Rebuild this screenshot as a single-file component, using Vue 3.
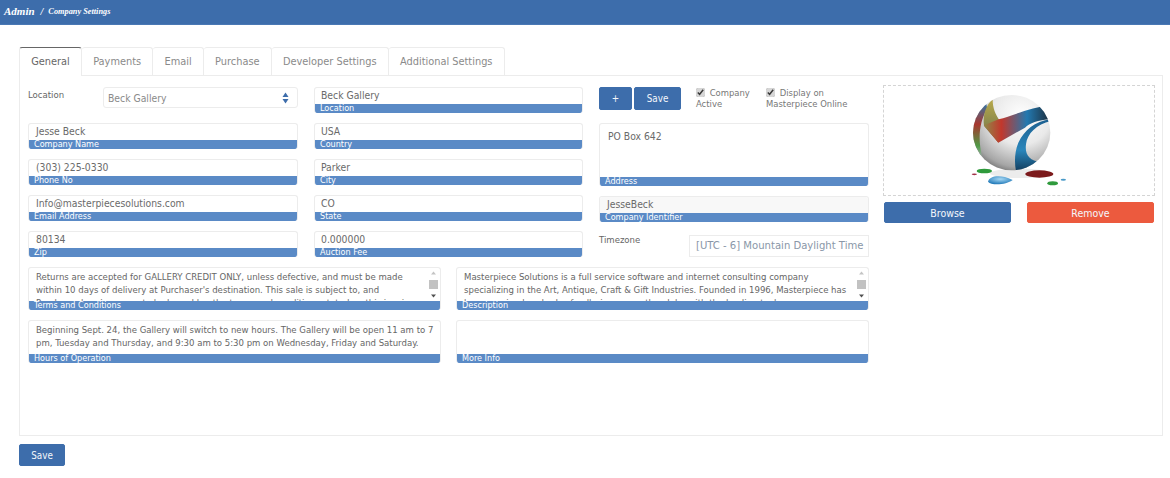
<script setup>
const tabs = ['General', 'Payments', 'Email', 'Purchase', 'Developer Settings', 'Additional Settings']

const leftFields = [
  { value: 'Jesse Beck', label: 'Company Name' },
  { value: '(303) 225-0330', label: 'Phone No' },
  { value: 'Info@masterpiecesolutions.com', label: 'Email Address' },
  { value: '80134', label: 'Zip' },
]

const midFields = [
  { value: 'Beck Gallery', label: 'Location' },
  { value: 'USA', label: 'Country' },
  { value: 'Parker', label: 'City' },
  { value: 'CO', label: 'State' },
  { value: '0.000000', label: 'Auction Fee' },
]

const areas = [
  {
    label: 'Terms and Conditions',
    scroll: true,
    text: "Returns are accepted for GALLERY CREDIT ONLY, unless defective, and must be made within 10 days of delivery at Purchaser's destination. This sale is subject to, and\nPurchaser herein agrees to be bound by, the terms and conditions stated on this invoice.",
  },
  {
    label: 'Description',
    scroll: true,
    text: 'Masterpiece Solutions is a full service software and internet consulting company specializing in the Art, Antique, Craft & Gift Industries. Founded in 1996, Masterpiece has been serving hundreds of galleries across the globe with the leading tools.',
  },
  {
    label: 'Hours of Operation',
    scroll: false,
    text: 'Beginning Sept. 24, the Gallery will switch to new hours. The Gallery will be open 11 am to 7\npm, Tuesday and Thursday, and 9:30 am to 5:30 pm on Wednesday, Friday and Saturday.',
  },
  { label: 'More Info', scroll: false, text: '' },
]
</script>

<template>
  <div class="page">
    <header class="topbar">
      <span class="crumb-main">Admin</span>
      <span class="crumb-sep">/</span>
      <span class="crumb-sub">Company Settings</span>
    </header>

    <div class="content">
      <ul class="tabs">
        <li v-for="(tab, i) in tabs" :key="tab" :class="['tab', { active: i === 0 }]">{{ tab }}</li>
      </ul>

      <section class="panel">
        <div class="form">
          <div class="fields">
            <div class="column">
              <div class="location-row">
                <span class="plain-label">Location</span>
                <div class="select">
                  <span>Beck Gallery</span>
                  <svg width="7" height="12" viewBox="0 0 7 12">
                    <path d="M3.5 0.5 L6.5 5 H0.5 Z" fill="#3d6dab" />
                    <path d="M3.5 11.5 L6.5 7 H0.5 Z" fill="#3d6dab" />
                  </svg>
                </div>
              </div>
              <div v-for="f in leftFields" :key="f.label" class="field">
                <div class="value">{{ f.value }}</div>
                <div class="bar">{{ f.label }}</div>
              </div>
            </div>

            <div class="column">
              <div v-for="f in midFields" :key="f.label" class="field">
                <div class="value">{{ f.value }}</div>
                <div class="bar">{{ f.label }}</div>
              </div>
            </div>

            <div class="column">
              <div class="actions">
                <button class="btn btn-plus">+</button>
                <button class="btn btn-save">Save</button>
                <label class="check check-one"><input type="checkbox" checked /> Company Active</label>
                <label class="check check-two"><input type="checkbox" checked /> Display on Masterpiece Online</label>
              </div>
              <div class="field address">
                <div class="value">PO Box 642</div>
                <div class="bar">Address</div>
              </div>
              <div class="field readonly">
                <div class="value">JesseBeck</div>
                <div class="bar">Company Identifier</div>
              </div>
              <div class="timezone-row">
                <span class="plain-label">Timezone</span>
                <div class="timezone">[UTC - 6] Mountain Daylight Time</div>
              </div>
            </div>
          </div>

          <div class="areas">
            <div v-for="a in areas" :key="a.label" class="area">
              <div class="area-body">
                <p class="area-text">{{ a.text }}</p>
                <div v-if="a.scroll" class="scrollbar">
                  <svg width="9" height="6" viewBox="0 0 9 6"><path d="M4.5 1.5 L7 4.5 H2 Z" fill="#c4c4c4" /></svg>
                  <div class="thumb"></div>
                  <svg width="9" height="6" viewBox="0 0 9 6"><path d="M4.5 4.5 L7 1.5 H2 Z" fill="#505050" /></svg>
                </div>
              </div>
              <div class="bar">{{ a.label }}</div>
            </div>
          </div>
        </div>

        <aside class="logo-side">
          <div class="dropzone">
            <svg class="logo" width="130" height="109" viewBox="0 0 390 327">
              <defs>
                <radialGradient id="ball" cx="0.62" cy="0.28" r="0.85">
                  <stop offset="0" stop-color="#ffffff" />
                  <stop offset="0.45" stop-color="#e9e9e9" />
                  <stop offset="0.8" stop-color="#a6a6a6" />
                  <stop offset="1" stop-color="#4e4e4e" />
                </radialGradient>
                <linearGradient id="band" x1="0" y1="0" x2="1" y2="0">
                  <stop offset="0" stop-color="#8f8a48" />
                  <stop offset="0.25" stop-color="#c2372c" />
                  <stop offset="0.62" stop-color="#2379b0" />
                  <stop offset="1" stop-color="#1b222b" />
                </linearGradient>
                <linearGradient id="arm" x1="0" y1="0" x2="0" y2="1">
                  <stop offset="0" stop-color="#b8a94a" />
                  <stop offset="0.55" stop-color="#8c8a4c" />
                  <stop offset="1" stop-color="#a2432f" />
                </linearGradient>
                <linearGradient id="stem" x1="0" y1="0" x2="0" y2="1">
                  <stop offset="0" stop-color="#1c5f8f" />
                  <stop offset="0.6" stop-color="#2a86bb" />
                  <stop offset="1" stop-color="#123c5c" />
                </linearGradient>
                <linearGradient id="edge" x1="0" y1="0" x2="0" y2="1">
                  <stop offset="0" stop-color="#2f78a8" />
                  <stop offset="0.4" stop-color="#a8362e" />
                  <stop offset="0.8" stop-color="#4f9a45" />
                  <stop offset="1" stop-color="#9db0a8" />
                </linearGradient>
                <radialGradient id="blue" cx="0.5" cy="0.35" r="0.65">
                  <stop offset="0" stop-color="#a6d8f4" />
                  <stop offset="1" stop-color="#1f78b8" />
                </radialGradient>
                <clipPath id="sphere">
                  <ellipse cx="185" cy="140" rx="116" ry="113" />
                </clipPath>
              </defs>
              <ellipse cx="210" cy="262" rx="90" ry="14" fill="#ececec" />
              <ellipse cx="185" cy="140" rx="116" ry="113" fill="url(#ball)" />
              <g clip-path="url(#sphere)">
                <path d="M108 50 C60 95 50 160 96 212 C84 160 86 110 112 68 Z" fill="url(#edge)" />
                <path d="M128 40 C106 60 98 90 102 120 L145 170 L150 105 C136 86 128 66 128 40 Z" fill="url(#arm)" />
                <path d="M102 118 L146 100 C190 90 250 58 310 58 L310 100 C265 100 240 112 225 125 L145 170 Z" fill="url(#band)" />
                <path d="M310 98 C255 105 225 130 205 170 C195 195 192 225 198 255 C218 258 250 250 272 228 C238 226 224 205 228 175 C232 142 262 112 310 104 Z" fill="url(#stem)" />
              </g>
              <ellipse cx="103" cy="255" rx="23" ry="7" fill="#2f9a3c" />
              <ellipse cx="73" cy="265" rx="8" ry="2.5" fill="#a03048" />
              <path d="M114 287 C118 270 150 264 188 282 C170 296 125 300 114 287 Z" fill="url(#blue)" />
              <ellipse cx="268" cy="264" rx="42" ry="11" fill="#7c1a1c" />
              <ellipse cx="308" cy="292" rx="16" ry="6" fill="#2f9a3c" />
              <ellipse cx="340" cy="281" rx="8" ry="3" fill="#4a9ac8" />
            </svg>
          </div>
          <div class="logo-buttons">
            <button class="btn btn-wide">Browse</button>
            <button class="btn btn-wide btn-danger">Remove</button>
          </div>
        </aside>
      </section>

      <button class="btn btn-bottom">Save</button>
    </div>
  </div>
</template>

<style>
html,
body {
  margin: 0;
  background: #ffffff;
}
</style>

<style scoped>
.page {
  width: 1170px;
  height: 478px;
  overflow: hidden;
  font-family: "DejaVu Sans Condensed", "DejaVu Sans", sans-serif;
  font-stretch: condensed;
  font-size: 10.3px;
  color: #666666;
}

.topbar {
  height: 25px;
  box-sizing: border-box;
  background: #3d6dab;
  border-bottom: 1px solid #4a78b4;
  padding: 5px 0 0 4px;
  color: #ffffff;
  font-family: "Liberation Serif", serif;
  font-style: italic;
  font-weight: bold;
  line-height: 13px;
  display: flex;
  gap: 5px;
}

.crumb-main {
  font-size: 11px;
}

.crumb-sep {
  font-size: 10px;
  margin-left: 1px;
}

.crumb-sub {
  font-size: 8.3px;
}

.content {
  padding: 22px 7px 0 19px;
}

.tabs {
  list-style: none;
  display: flex;
  margin: 0;
  padding: 0;
}

.tab {
  box-sizing: border-box;
  height: 28px;
  line-height: 27px;
  padding: 0 11.2px;
  border: 1px solid #ececec;
  border-left: 0;
  border-bottom: 0;
  border-radius: 3px 3px 0 0;
  color: #8a8a8a;
  font-size: 10.9px;
}

.tab.active {
  border-left: 1px solid #ececec;
  border-top: 1px solid #666666;
  color: #666666;
  background: #ffffff;
  position: relative;
  margin-bottom: -1px;
  height: 29px;
  z-index: 1;
}

.panel {
  box-sizing: border-box;
  width: 1144px;
  height: 361px;
  border: 1px solid #ececec;
  padding: 11px 8px 0 8px;
  display: flex;
  gap: 14px;
}

.form {
  width: 841px;
  flex: none;
}

.fields {
  display: grid;
  grid-template-columns: 270px 269px 270px;
  column-gap: 16px;
}

.column {
  display: flex;
  flex-direction: column;
  gap: 10px;
}

.field {
  box-sizing: border-box;
  height: 26px;
  display: flex;
  flex-direction: column;
  border: 1px solid #ececec;
  border-bottom: 0;
  border-radius: 3px;
  overflow: hidden;
}

.value {
  flex: 1;
  padding: 0 7px;
  line-height: 15px;
  white-space: nowrap;
  color: #6a6a6a;
}

.column:nth-child(2) .value {
  padding-left: 6px;
}

.bar {
  height: 9px;
  margin: 0 -1px;
  padding-left: 6px;
  background: #5a8ac6;
  color: #ffffff;
  font-size: 9px;
  line-height: 9px;
  overflow: hidden;
  white-space: nowrap;
  border-radius: 0 0 3px 3px;
  flex: none;
}

.location-row {
  height: 26px;
  display: flex;
  justify-content: space-between;
}

.plain-label {
  font-size: 9.5px;
  line-height: 16px;
  color: #666666;
}

.select {
  box-sizing: border-box;
  width: 195px;
  height: 21px;
  border: 1px solid #ececec;
  border-radius: 3px;
  padding: 0 8px 0 4px;
  display: flex;
  align-items: center;
  justify-content: space-between;
  color: #8a8a8a;
  font-size: 10.3px;
}

.actions {
  height: 26px;
  display: flex;
  align-items: flex-start;
  font-size: 10px;
}

.btn {
  border: 1px solid #3d6dab;
  border-radius: 2px;
  background: #3d6dab;
  color: #f4f7fb;
  font-family: inherit;
  font-size: 9.8px;
  padding: 0;
  height: 23px;
  flex: none;
}

.btn-plus {
  width: 33px;
}

.btn-save {
  width: 47px;
  margin-left: 2px;
}

.check {
  font-size: 9.4px;
  line-height: 10.5px;
  color: #777777;
  margin-top: 1px;
}

.check input {
  width: 9px;
  height: 9px;
  margin: 0 2px 0 0;
  vertical-align: -1px;
  accent-color: #d6d6d6;
}

.check-one {
  width: 62px;
  margin-left: 15px;
}

.check-two {
  width: 100px;
  margin-left: 8px;
}

.field.address {
  height: 63px;
}

.address .value {
  padding: 5px 8px;
}

.readonly .value {
  background: #f8f8f8;
}

.timezone-row {
  display: flex;
  justify-content: space-between;
  height: 26px;
}

.timezone {
  box-sizing: border-box;
  width: 180px;
  height: 22px;
  margin-top: 3px;
  border: 1px solid #ececec;
  padding: 0 6px;
  line-height: 20px;
  font-size: 11.2px;
  color: #8a97a8;
  white-space: nowrap;
}

.areas {
  display: grid;
  grid-template-columns: 413px 413px;
  column-gap: 15px;
  row-gap: 10px;
  margin-top: 9px;
}

.area {
  box-sizing: border-box;
  height: 43px;
  display: flex;
  flex-direction: column;
  border: 1px solid #ececec;
  border-bottom: 0;
  border-radius: 3px;
  overflow: hidden;
}

.area-body {
  flex: 1;
  display: flex;
  min-height: 0;
  overflow: hidden;
}

.area-text {
  flex: 1;
  margin: 0;
  padding: 2px 2px 0 7px;
  font-size: 9.5px;
  line-height: 13px;
  color: #666666;
  white-space: pre-line;
}

.scrollbar {
  width: 13px;
  flex: none;
  display: flex;
  flex-direction: column;
  align-items: center;
  justify-content: space-between;
  padding: 2px 0;
  box-sizing: border-box;
}

.thumb {
  width: 9px;
  height: 9px;
  background: #c2c2c2;
}

.logo-side {
  width: 272px;
  flex: none;
  margin-top: -2px;
}

.dropzone {
  box-sizing: border-box;
  height: 111px;
  border: 1px dashed #d4d4d4;
  display: flex;
  justify-content: center;
  align-items: center;
}

.logo {
  margin-right: 8px;
}

.logo-buttons {
  display: flex;
  justify-content: space-between;
  margin-top: 6px;
  padding: 0 1px;
}

.btn-wide {
  width: 127px;
  height: 21px;
  font-size: 10.5px;
}

.btn-danger {
  background: #ec5a3e;
  border-color: #ec5a3e;
}

.btn-bottom {
  display: block;
  width: 46px;
  height: 22px;
  margin-top: 8px;
}
</style>
